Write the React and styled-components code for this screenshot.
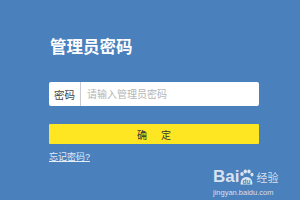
import React from 'react';
import styled, { createGlobalStyle } from 'styled-components';

const GlobalStyle = createGlobalStyle`
  html, body { margin: 0; padding: 0; }
  body { font-family: "Liberation Sans", "Noto Sans CJK SC", sans-serif; }
`;

export default function App() {
  return (
    <>
      <GlobalStyle />
      <Page>
        <Form>
          <Title>管理员密码</Title>
          <InputRow>
            <Label>密码</Label>
            <Input type="password" placeholder="请输入管理员密码" />
          </InputRow>
          <Submit type="button">确&nbsp;&nbsp;&nbsp;&nbsp;&nbsp;定</Submit>
          <Forgot href="#">忘记密码?</Forgot>
        </Form>
        <Watermark>
          <Brand>
            <span>Bai</span>
            <Paw>
              <svg width="15" height="16" viewBox="0 0 15 16">
                <ellipse cx="3" cy="5" rx="1.7" ry="2.1" fill="rgba(255,255,255,0.8)" />
                <ellipse cx="6.3" cy="2.4" rx="1.7" ry="2" fill="rgba(255,255,255,0.8)" />
                <ellipse cx="10" cy="2.6" rx="1.7" ry="2" fill="rgba(255,255,255,0.8)" />
                <ellipse cx="13" cy="5.6" rx="1.5" ry="1.9" fill="rgba(255,255,255,0.8)" />
                <path d="M1.5 15.5 Q1.5 8 7.5 8 Q13.5 8 13.5 15.5 Z" fill="rgba(255,255,255,0.8)" />
              </svg>
              <PawText>du</PawText>
            </Paw>
            <Jy>经验</Jy>
          </Brand>
          <Url>jingyan.baidu.com</Url>
        </Watermark>
      </Page>
    </>
  );
}

const Page = styled.div`
  position: relative;
  width: 300px;
  height: 200px;
  background: #4a80bb;
  overflow: hidden;
`;

const Form = styled.div`
  display: flex;
  flex-direction: column;
  width: 210px;
  padding: 37px 0 0 49px;
`;

const Title = styled.h1`
  margin: 0 0 0 1px;
  font-size: 16.5px;
  line-height: 20px;
  font-weight: bold;
  color: #fff;
`;

const InputRow = styled.div`
  display: flex;
  align-items: center;
  height: 24px;
  margin-top: 25px;
  background: #fff;
  border-radius: 2px;
`;

const Label = styled.div`
  width: 32px;
  height: 24px;
  box-sizing: border-box;
  border-right: 1px solid #c8ccd2;
  display: flex;
  align-items: center;
  justify-content: center;
  font-size: 10.5px;
  color: #444;
`;

const Input = styled.input`
  flex: 1;
  height: 22px;
  border: none;
  outline: none;
  padding: 0 0 0 6px;
  font-family: inherit;
  font-size: 10px;
  color: #333;
  background: transparent;
  &::placeholder { color: #b5b5b5; }
`;

const Submit = styled.button`
  margin-top: 18px;
  height: 20px;
  border: none;
  border-radius: 1px;
  background: #ffe623;
  color: #333;
  font-family: inherit;
  font-size: 10px;
  padding: 0;
  cursor: pointer;
`;

const Forgot = styled.a`
  margin-top: 7px;
  align-self: flex-start;
  font-size: 9px;
  line-height: 12px;
  color: #e4ecf6;
  text-decoration: underline;
`;

const Watermark = styled.div`
  position: absolute;
  left: 213px;
  top: 168px;
  display: flex;
  flex-direction: column;
  align-items: flex-start;
  color: rgba(255, 255, 255, 0.78);
`;

const Brand = styled.div`
  display: flex;
  align-items: flex-end;
  font-size: 17px;
  font-weight: bold;
  line-height: 18px;
`;

const Paw = styled.span`
  position: relative;
  display: inline-flex;
  width: 15px;
  height: 16px;
  align-items: flex-end;
  margin: 0 1px 1px 0;
`;

const PawText = styled.span`
  position: absolute;
  left: 3px;
  bottom: 0;
  font-size: 6.5px;
  line-height: 7px;
  color: #4a80bb;
`;

const Jy = styled.span`
  font-size: 11px;
  font-weight: normal;
  line-height: 15px;
  margin-left: 1px;
`;

const Url = styled.div`
  margin-top: 2px;
  font-size: 7.5px;
  line-height: 9px;
`;
